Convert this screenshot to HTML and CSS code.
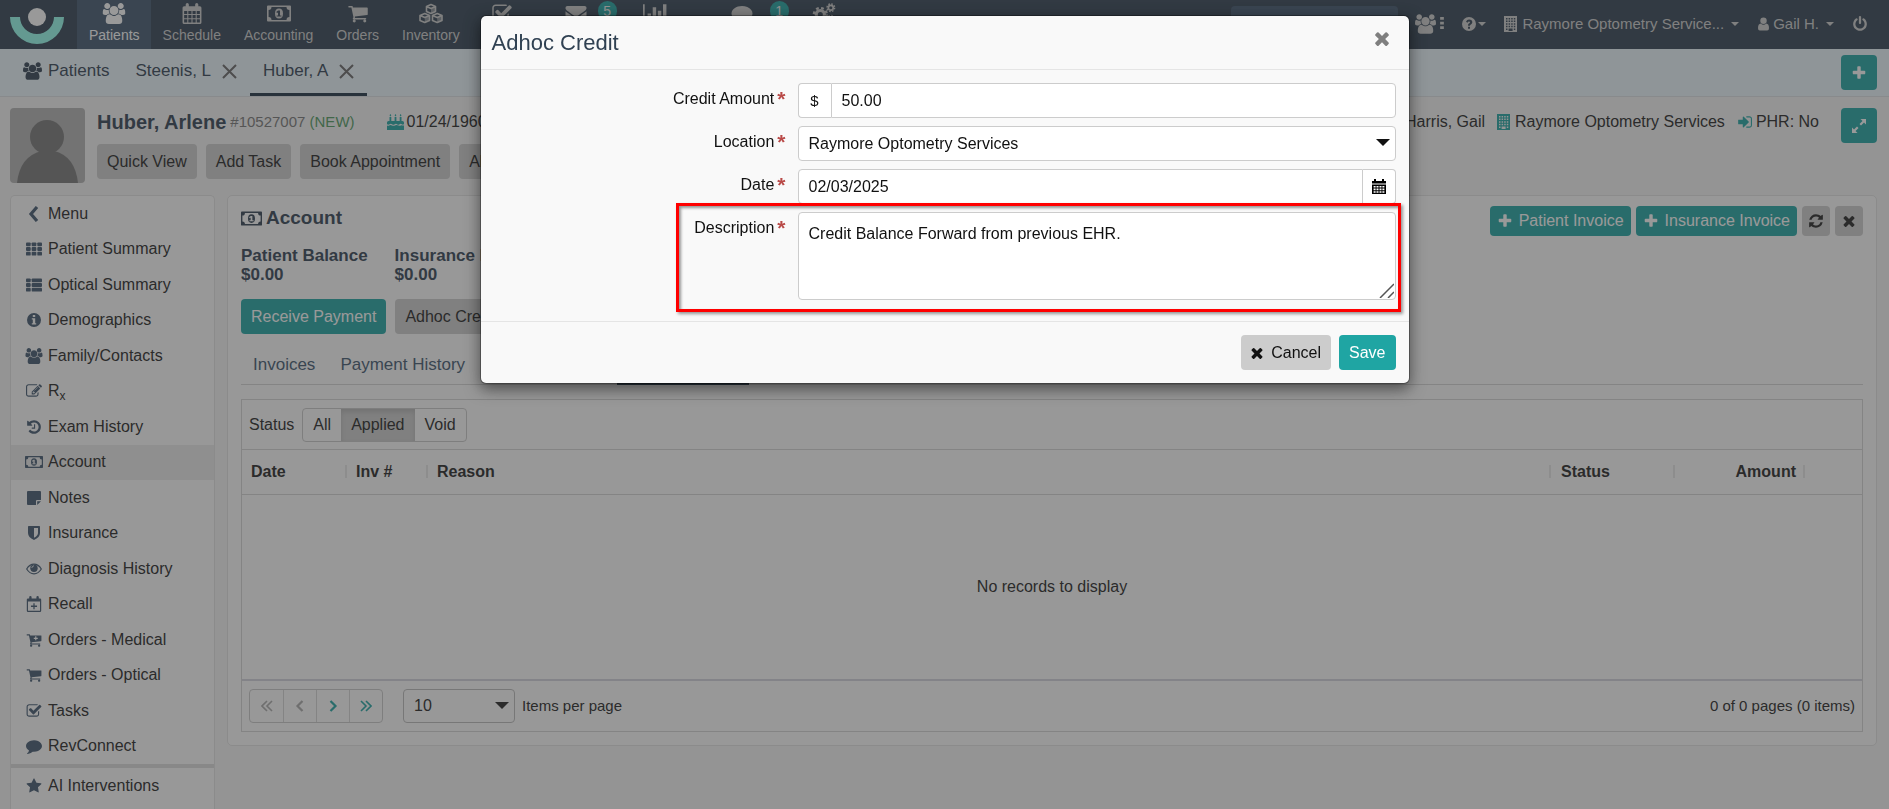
FILE: index.html
```html
<!DOCTYPE html>
<html lang="en">
<head>
<meta charset="utf-8">
<title>Adhoc Credit</title>
<link rel="stylesheet" href="styles.css">
</head>
<body>
<svg class="sprite" aria-hidden="true">
  <symbol id="users" viewBox="0 0 1920 1792"><path d="M593 896q-162 5-265 128h-134q-82 0-138-40.5t-56-118.5q0-353 124-353 6 0 43.5 21t97.5 42.5 119 21.5q67 0 133-23-5 37-5 66 0 139 81 256zm1071 637q0 120-73 189.5t-194 69.5h-874q-121 0-194-69.5t-73-189.5q0-53 3.5-103.5t14-109 26.5-108.5 43-97.5 62-81 85.5-53.5 111.5-20q10 0 43 21.5t73 48 107 48 135 21.5 135-21.5 107-48 73-48 43-21.5q61 0 111.5 20t85.5 53.5 62 81 43 97.5 26.5 108.5 14 109 3.5 103.5zm-1024-1277q0 106-75 181t-181 75-181-75-75-181 75-181 181-75 181 75 75 181zm704 384q0 159-112.5 271.5t-271.5 112.5-271.5-112.5-112.5-271.5 112.5-271.5 271.5-112.5 271.5 112.5 112.5 271.5zm576 225q0 78-56 118.5t-138 40.5h-134q-103-123-265-128 81-117 81-256 0-29-5-66 66 23 133 23 59 0 119-21.5t97.5-42.5 43.5-21q124 0 124 353zm-128-609q0 106-75 181t-181 75-181-75-75-181 75-181 181-75 181 75 75 181z"/></symbol>
  <symbol id="calendar" viewBox="0 0 20 20"><path fill-rule="evenodd" d="M2.500 3H4V1.500Q4 0 5.500 0T7 1.500V3h6V1.500Q13 0 14.500 0T16 1.500V3h1.500Q19 3 19 4.500v14Q19 20 17.500 20h-15Q1 20 1 18.500v-14Q1 3 2.500 3zM2.500 7.500v3h3v-3zM6.500 7.500v3h3v-3zM10.500 7.500v3h3v-3zM14.500 7.500v3h3v-3zM2.500 11.500v3h3v-3zM6.500 11.500v3h3v-3zM10.500 11.500v3h3v-3zM14.500 11.500v3h3v-3zM2.500 15.500v3h3v-3zM6.500 15.500v3h3v-3zM10.500 15.500v3h3v-3zM14.500 15.500v3h3v-3z"/></symbol>
  <symbol id="calsolid" viewBox="0 0 14 15"><path d="M0 2h2V0h2v2h6V0h2v2h2v2.500H0z"/><path fill-rule="evenodd" d="M0 5.500h14V15H0zM1.600 7v1.600h2V7zM4.500 7v1.600h2V7zM7.500 7v1.600h2V7zM10.400 7v1.600h2V7zM1.600 9.600v1.600h2V9.600zM4.500 9.600v1.600h2V9.600zM7.500 9.600v1.600h2V9.600zM10.400 9.600v1.600h2V9.600zM1.600 12.200v1.600h2v-1.600zM4.500 12.200v1.600h2v-1.600zM7.500 12.200v1.600h2v-1.600zM10.400 12.200v1.600h2v-1.600z"/></symbol>
  <symbol id="calplus" viewBox="0 0 20 20"><path fill-rule="evenodd" d="M2.500 3H4V1.500Q4 0 5.500 0T7 1.500V3h6V1.500Q13 0 14.500 0T16 1.500V3h1.500Q19 3 19 4.500v14Q19 20 17.500 20h-15Q1 20 1 18.500v-14Q1 3 2.500 3zM2.500 7v11.500h15V7zM9.200 9h1.600v3h3v1.600h-3v3H9.200v-3h-3V12h3z"/></symbol>
  <symbol id="money" viewBox="0 0 24 16"><path fill-rule="evenodd" d="M1 0h22q1 0 1 1v14q0 1-1 1H1q-1 0-1-1V1q0-1 1-1zm3.500 1.600Q4.500 4.500 1.600 4.500v7q2.900 0 2.900 2.900h15q0-2.900 2.900-2.900v-7q-2.900 0-2.900-2.900zM12 3q4 0 4 5t-4 5-4-5 4-5zm-.9 2-1.900 1.600.9 1 .9-.7v3H9.600V11h4.800V9.900H13V5z"/></symbol>
  <symbol id="cart" viewBox="0 0 1792 1792"><path d="M704 1536q0 52-38 90t-90 38-90-38-38-90 38-90 90-38 90 38 38 90zm896 0q0 52-38 90t-90 38-90-38-38-90 38-90 90-38 90 38 38 90zm128-1088v512q0 24-16.500 42.500t-40.500 21.500l-1044 122q13 60 13 70 0 16-24 64h920q26 0 45 19t19 45-19 45-45 19h-1024q-26 0-45-19t-19-45q0-11 8-31.500t16-36 21.500-40 15.500-29.500l-177-823h-204q-26 0-45-19t-19-45 19-45 45-19h256q16 0 28.500 6.500t19.500 15.500 13 24.500 8 26 5.500 29.500 4.500 26h1201q26 0 45 19t19 45z"/></symbol>
  <symbol id="cartplus" viewBox="0 0 1792 1792"><path fill-rule="evenodd" d="M704 1536q0 52-38 90t-90 38-90-38-38-90 38-90 90-38 90 38 38 90zm896 0q0 52-38 90t-90 38-90-38-38-90 38-90 90-38 90 38 38 90zm128-1088v512q0 24-16.500 42.500t-40.500 21.500l-1044 122q13 60 13 70 0 16-24 64h920q26 0 45 19t19 45-19 45-45 19h-1024q-26 0-45-19t-19-45q0-11 8-31.500t16-36 21.500-40 15.500-29.500l-177-823h-204q-26 0-45-19t-19-45 19-45 45-19h256q16 0 28.500 6.500t19.500 15.500 13 24.500 8 26 5.500 29.500 4.500 26h1201q26 0 45 19t19 45zM1030 480v160H870v130h160v160h130V770h160V640h-160V480z"/></symbol>
  <symbol id="cubes" viewBox="0 0 24 20"><g fill="none" stroke="currentColor" stroke-width="1.600" stroke-linejoin="round"><path d="M12 1l4.500 2v5L12 10 7.500 8V3zM7.500 3L12 5l4.500-2M5.800 10l4.700 2v5l-4.700 2-4.800-2v-5zM1 12l4.800 2 4.700-2M18.200 10l4.800 2v5l-4.800 2-4.700-2v-5zM13.500 12l4.700 2 4.800-2"/></g><path d="M12 5l4.500-2v5L12 10zM5.800 14l4.700-2v5l-4.700 2zM18.200 14l4.800-2v5l-4.800 2z" opacity=".55"/></symbol>
  <symbol id="check" viewBox="0 0 1792 1792"><path d="M1472 930v318q0 119-84.500 203.500t-203.500 84.500h-832q-119 0-203.500-84.500t-84.500-203.500v-832q0-119 84.500-203.500t203.500-84.500h832q63 0 117 25 15 7 18 23 3 17-9 29l-49 49q-10 10-23 10-3 0-9-2-23-6-45-6h-832q-66 0-113 47t-47 113v832q0 66 47 113t113 47h832q66 0 113-47t47-113v-254q0-13 9-22l64-64q10-10 23-10 6 0 12 3 20 8 20 29zm231-489l-814 814q-24 24-57 24t-57-24l-430-430q-24-24-24-57t24-57l110-110q24-24 57-24t57 24l263 263 647-647q24-24 57-24t57 24l110 110q24 24 24 57t-24 57z"/></symbol>
  <symbol id="envelope" viewBox="0 0 1792 1792"><path d="M1792 710v794q0 66-47 113t-113 47h-1472q-66 0-113-47t-47-113v-794q44 49 101 87 362 246 497 345 57 42 92.500 65.500t94.500 48 110 24.500h2q51 0 110-24.500t94.500-48 92.500-65.500q170-123 498-345 57-39 100-87zm0-294q0 79-49 151t-122 123q-376 261-468 325-10 7-42.500 31t-54 38.500-52 32.500-57.500 27-50 9h-2q-23 0-50-9t-57.500-27-52-32.500-54-38.500-42.500-31q-91-64-262-182.500t-205-142.500q-62-42-117-115.500t-55-136.500q0-78 41.500-130t118.500-52h1472q65 0 112.500 47t47.500 113z"/></symbol>
  <symbol id="chart" viewBox="0 0 21 18"><path d="M0 1h1.500v14H21v1.500H0zM4 9h3v5H4zM8.500 3.500h3V14h-3zM13 6.500h3V14h-3zM17.500 1h3v13h-3z"/></symbol>
  <symbol id="comment" viewBox="0 0 1792 1792"><path d="M1792 896q0 174-120 321.500t-326 233-450 85.500q-70 0-145-8-198 175-460 242-49 14-114 22-17 2-30.500-9t-17.500-29v-1q-3-4-.5-12t2-10 4.500-9.500l6-9 7-8.500 8-9q7-8 31-34.500t34.500-38 31-39.500 32.500-51 27-59 26-76q-157-89-247.500-220t-90.500-281q0-130 71-248.500t191-204.500 286-136.500 348-50.500q244 0 450 85.500t326 233 120 321.500z"/></symbol>
  <symbol id="cogs" viewBox="0 0 22 20"><g fill="none" stroke="currentColor"><circle cx="7.500" cy="11" r="3.900" stroke-width="3"/><circle cx="7.500" cy="11" r="6.200" stroke-width="2.200" stroke-dasharray="2.600 2.270"/><circle cx="17.500" cy="4.500" r="2.300" stroke-width="1.600"/><circle cx="17.500" cy="4.500" r="3.600" stroke-width="1.400" stroke-dasharray="1.500 1.327"/><circle cx="17.500" cy="15.500" r="2.300" stroke-width="1.600"/><circle cx="17.500" cy="15.500" r="3.600" stroke-width="1.400" stroke-dasharray="1.500 1.327"/></g></symbol>
  <symbol id="dots" viewBox="0 0 4 14"><path d="M0 0h4v3H0zM0 5h4v3H0zM0 10h4v3H0z"/></symbol>
  <symbol id="question" viewBox="0 0 14 14"><path fill-rule="evenodd" d="M7 0a7 7 0 1 1 0 14A7 7 0 0 1 7 0zM6 9.800v2h2v-2zM4 4.700l1.500 1Q6.100 4.400 7 4.400q1 0 1 .8T6.900 6.600Q6 7.200 6 8.800h2q0-.9.900-1.400Q10.300 6.500 10.300 5.200 10.300 2.400 7 2.400 5 2.400 4 4.700z"/></symbol>
  <symbol id="building" viewBox="0 0 13 16"><path fill-rule="evenodd" d="M0 0h13v16H0zM2 2v1.500h1.500V2zM4.600 2v1.500h1.500V2zM7.200 2v1.500h1.500V2zM9.800 2v1.500h1.500V2zM2 4.600v1.500h1.500V4.600zM4.600 4.600v1.500h1.500V4.600zM7.200 4.600v1.500h1.500V4.600zM9.800 4.600v1.500h1.500V4.600zM2 7.200v1.500h1.500V7.200zM4.600 7.200v1.500h1.500V7.200zM7.200 7.200v1.500h1.500V7.200zM9.800 7.200v1.500h1.500V7.200zM2 9.800v1.500h1.500V9.800zM4.600 9.800v1.500h1.500V9.800zM7.200 9.800v1.500h1.500V9.800zM9.800 9.800v1.500h1.500V9.800zM2 12.400v1.500h1.500v-1.500zM4.600 12.400V15h4v-2.600zM9.800 12.400v1.500h1.500v-1.500z"/></symbol>
  <symbol id="user" viewBox="0 0 12 14"><circle cx="6" cy="3.500" r="3.500"/><path d="M3 6.500Q4.300 7.800 6 7.800T9 6.500Q12 6.800 12 11.500 12 14 10 14H2Q0 14 0 11.500 0 6.800 3 6.500z"/></symbol>
  <symbol id="power" viewBox="0 0 1792 1792"><path d="M1664 896q0 156-61 298t-164 245-245 164-298 61-298-61-245-164-164-245-61-298q0-182 80.500-343t226.500-270q43-32 95.500-25t83.500 50q32 42 24.500 94.500t-49.500 84.500q-98 74-151.500 181t-53.500 228q0 104 40.500 198.500t109.500 163.500 163.500 109.500 198.500 40.500 198.500-40.500 163.500-109.500 109.500-163.500 40.500-198.500q0-121-53.500-228t-151.500-181q-42-32-49.500-84.500t24.500-94.500q31-43 84-50t95 25q146 109 226.500 270t80.500 343zm-640-768v640q0 52-38 90t-90 38-90-38-38-90v-640q0-52 38-90t90-38 90 38 38 90z"/></symbol>
  <symbol id="plus" viewBox="0 0 1792 1792"><path d="M1600 736v192q0 40-28 68t-68 28h-416v416q0 40-28 68t-68 28h-192q-40 0-68-28t-28-68v-416h-416q-40 0-68-28t-28-68v-192q0-40 28-68t68-28h416v-416q0-40 28-68t68-28h192q40 0 68 28t28 68v416h416q40 0 68 28t28 68z"/></symbol>
  <symbol id="times" viewBox="256 256 1280 1300"><path d="M1490 1322q0 40-28 68l-136 136q-28 28-68 28t-68-28l-294-294-294 294q-28 28-68 28t-68-28l-136-136q-28-28-28-68t28-68l294-294-294-294q-28-28-28-68t28-68l136-136q28-28 68-28t68 28l294 294 294-294q28-28 68-28t68 28l136 136q28 28 28 68t-28 68l-294 294 294 294q28 28 28 68z"/></symbol>
  <symbol id="thin-x" viewBox="0 0 15 15"><path d="M1 1l13 13M14 1L1 14" fill="none" stroke="currentColor" stroke-width="2"/></symbol>
  <symbol id="expand" viewBox="0 0 14 14"><path d="M8.500 0H14v5.500L12 3.500 9 6.500 7.500 5l3-3zM5.500 14H0V8.500l2 2 3-3L6.500 9l-3 3z"/></symbol>
  <symbol id="cake" viewBox="0 0 17 16"><path d="M2.500 3h1.800v4H2.500zM7.600 3h1.800v4H7.600zM12.700 3h1.800v4h-1.800zM3.400 0l.9 1.300-.9 1.200-.9-1.200zM8.500 0l.9 1.300-.9 1.200-.9-1.200zM13.600 0l.9 1.300-.9 1.200-.9-1.200zM1.500 7h14Q17 7 17 8.500V10q-1 1.200-2.200.2-1.200-1-2.200 0-1.500 1.200-2.500 0-1.200-1-2.400 0-1.400 1.200-2.600 0-1.300-1-2.500 0Q1 11.200 0 10V8.500Q0 7 1.500 7zM0 11.600q1.400.6 2.600-.4 1.400-.5 2.400.4 1.500.6 3.500-.4 1.500-.5 3 .4 1.300.4 2.700-.4 1.400.2 2.800.4V16H0z"/></symbol>
  <symbol id="signin" viewBox="0 128 1664 1536"><path d="M1312 896q0 26-19 45l-544 544q-19 19-45 19t-45-19-19-45v-288h-448q-26 0-45-19t-19-45v-384q0-26 19-45t45-19h448v-288q0-26 19-45t45-19 45 19l544 544q19 19 19 45zm352-352v704q0 119-84.500 203.500t-203.500 84.500h-320q-13 0-22.500-9.500t-9.500-22.500q0-70 35-96h320q66 0 113-47t47-113v-704q0-66-47-113t-113-47h-312q-43-5-43-64 0-64 32-64h320q119 0 203.500 84.500t84.500 203.500z"/></symbol>
  <symbol id="chevron" viewBox="0 0 12 16"><path d="M9 1L3 8l6 7" fill="none" stroke="currentColor" stroke-width="3.200"/></symbol>
  <symbol id="th" viewBox="0 0 17 14"><rect width="5" height="4" rx="1"/><rect x="6" width="5" height="4" rx="1"/><rect x="12" width="5" height="4" rx="1"/><rect y="5" width="5" height="4" rx="1"/><rect x="6" y="5" width="5" height="4" rx="1"/><rect x="12" y="5" width="5" height="4" rx="1"/><rect y="10" width="5" height="4" rx="1"/><rect x="6" y="10" width="5" height="4" rx="1"/><rect x="12" y="10" width="5" height="4" rx="1"/></symbol>
  <symbol id="thlist" viewBox="0 0 17 14"><rect width="5" height="4" rx="1"/><rect x="6" width="11" height="4" rx="1"/><rect y="5" width="5" height="4" rx="1"/><rect x="6" y="5" width="11" height="4" rx="1"/><rect y="10" width="5" height="4" rx="1"/><rect x="6" y="10" width="11" height="4" rx="1"/></symbol>
  <symbol id="info" viewBox="0 0 14 14"><path fill-rule="evenodd" d="M7 0a7 7 0 1 1 0 14A7 7 0 0 1 7 0zM5.800 2v2h2.400V2zM4.800 5.200v1.300h1v3.700h-1v1.400h4.400v-1.400h-1v-5z"/></symbol>
  <symbol id="edit" viewBox="0 0 1792 1792"><path d="M888 1184l116-116-152-152-116 116v56h96v96h56zm440-720q-16-16-33 1l-350 350q-17 17-1 33t33-1l350-350q17-17 1-33zm80 594v190q0 119-84.500 203.500t-203.500 84.500h-832q-119 0-203.500-84.500t-84.500-203.500v-832q0-119 84.500-203.500t203.500-84.500h832q63 0 117 25 15 7 18 23 3 17-9 29l-49 49q-14 14-32 8-23-6-45-6h-832q-66 0-113 47t-47 113v832q0 66 47 113t113 47h832q66 0 113-47t47-113v-126q0-13 9-22l64-64q15-15 35-7t20 29zm-96-738l288 288-672 672h-288v-288zm444 132l-92 92-288-288 92-92q28-28 68-28t68 28l152 152q28 28 28 68t-28 68z"/></symbol>
  <symbol id="history" viewBox="0 0 1792 1792"><path d="M1664 896q0 156-61 298t-164 245-245 164-298 61q-172 0-327-72.500t-264-204.500q-7-10-6.500-22.500t8.500-20.500l137-138q10-9 25-9 16 2 23 12 73 95 179 147t225 52q104 0 198.500-40.500t163.500-109.500 109.500-163.500 40.500-198.500-40.500-198.500-109.500-163.500-163.500-109.500-198.500-40.500q-98 0-188 35.500t-160 101.500l137 138q31 30 14 69-17 40-59 40h-448q-26 0-45-19t-19-45v-448q0-42 40-59 39-17 69 14l130 129q107-101 244.500-156.500t284.500-55.500q156 0 298 61t245 164 164 245 61 298zm-640-288v448q0 14-9 23t-23 9h-320q-14 0-23-9t-9-23v-64q0-14 9-23t23-9h224v-352q0-14 9-23t23-9h64q14 0 23 9t9 23z"/></symbol>
  <symbol id="note" viewBox="0 0 14 14"><path d="M1 0h12q1 0 1 1v8h-4q-1 0-1 1v4H1q-1 0-1-1V1q0-1 1-1zM10.200 10.200H14L10.200 14z"/></symbol>
  <symbol id="shield" viewBox="0 0 12 14"><path fill-rule="evenodd" d="M.7 0h10.600q.7 0 .7.700V7q0 4.300-6 7Q0 11.300 0 7V.7Q0 0 .7 0zM6 2v9.800Q10 9.700 10 7V2z"/></symbol>
  <symbol id="eye" viewBox="0 0 16 12"><path d="M.7 6Q3.600 1.200 8 1.200T15.300 6Q12.400 10.800 8 10.800T.7 6z" fill="none" stroke="currentColor" stroke-width="1.200"/><circle cx="8" cy="5.200" r="3.700"/><path d="M5.800 5Q6 3 8 2.800" stroke="#fff" stroke-width=".8" fill="none"/></symbol>
  <symbol id="star" viewBox="0 0 1792 1792"><path d="M1728 647q0 22-26 48l-363 354 86 500q1 7 1 20 0 21-10.500 35.500t-30.500 14.500q-19 0-40-12l-449-236-449 236q-22 12-40 12-21 0-31.500-14.500t-10.500-35.500q0-6 2-20l86-500-364-354q-25-27-25-48 0-37 56-46l502-73 225-455q19-41 49-41t49 41l225 455 502 73q56 9 56 46z"/></symbol>
  <symbol id="refresh" viewBox="0 0 1792 1792"><path d="M1639 1056q0 5-1 7-64 268-268 434.500t-478 166.500q-146 0-282.500-55t-243.500-157l-129 129q-19 19-45 19t-45-19-19-45v-448q0-26 19-45t45-19h448q26 0 45 19t19 45-19 45l-137 137q71 66 161 102t187 36q134 0 250-65t186-179q11-17 53-117 8-23 30-23h192q13 0 22.500 9.500t9.500 22.500zm25-800v448q0 26-19 45t-45 19h-448q-26 0-45-19t-19-45 19-45l138-138q-148-137-349-137-134 0-250 65t-186 179q-11 17-53 117-8 23-30 23h-199q-13 0-22.500-9.500t-9.500-22.500v-7q65-268 270-434.500t480-166.500q146 0 284 55.500t245 156.500l130-129q19-19 45-19t45 19 19 45z"/></symbol>
  <symbol id="angle" viewBox="0 0 12 12"><path d="M3.500 1l5 5-5 5" fill="none" stroke="currentColor" stroke-width="2.200"/></symbol>
  <symbol id="angles" viewBox="0 0 12 12"><path d="M1 1l5 5-5 5M6 1l5 5-5 5" fill="none" stroke="currentColor" stroke-width="1.600"/></symbol>
</svg>

<div class="app">
  <header class="topbar">
    <svg class="logo" viewBox="0 0 54 36" role="img" aria-label="Logo"><path d="M0 9h10a17 17 0 0 0 34 0h10a27 27 0 0 1-54 0z" fill="#95ffef"/><circle cx="27" cy="9" r="9" fill="#fff"/></svg>
    <nav class="mainnav">
      <a href="#" class="nav-item nav-active"><svg class="i-nav"><use href="#users"/></svg>Patients</a>
      <a href="#" class="nav-item"><svg class="i-nav"><use href="#calendar"/></svg>Schedule</a>
      <a href="#" class="nav-item"><svg class="i-nav"><use href="#money"/></svg>Accounting</a>
      <a href="#" class="nav-item"><svg class="i-nav"><use href="#cart"/></svg>Orders</a>
      <a href="#" class="nav-item"><svg class="i-nav"><use href="#cubes"/></svg>Inventory</a>
      <a href="#" class="nav-item nav-small" aria-label="Tasks"><svg class="i-nav"><use href="#check"/></svg></a>
      <a href="#" class="nav-item nav-messages" aria-label="Messages"><svg class="i-nav"><use href="#envelope"/></svg><span class="badge">5</span></a>
      <a href="#" class="nav-item nav-reports" aria-label="Reports"><svg class="i-nav"><use href="#chart"/></svg></a>
      <a href="#" class="nav-item nav-chat" aria-label="RevConnect"><svg class="i-nav"><use href="#comment"/></svg><span class="badge">1</span></a>
      <a href="#" class="nav-item nav-small" aria-label="More"><svg class="i-nav"><use href="#cogs"/></svg></a>
    </nav>
    <div class="topright">
      <input class="search" type="search" aria-label="Search">
      <button class="topbtn people" aria-label="Recent patients"><svg class="i-people"><use href="#users"/></svg><svg class="i-dots"><use href="#dots"/></svg></button>
      <button class="topbtn help" aria-label="Help"><svg class="i14"><use href="#question"/></svg><span class="caret"></span></button>
      <button class="topbtn place"><svg class="i-building"><use href="#building"/></svg>Raymore Optometry Service...<span class="caret"></span></button>
      <button class="topbtn account"><svg class="i-user"><use href="#user"/></svg>Gail H.<span class="caret"></span></button>
      <button class="topbtn" aria-label="Log out"><svg class="i16"><use href="#power"/></svg></button>
    </div>
  </header>

  <div class="tabbar">
    <a href="#" class="ptab"><svg class="i-tab"><use href="#users"/></svg>Patients</a>
    <a href="#" class="ptab">Steenis, L<svg class="i-x"><use href="#thin-x"/></svg></a>
    <a href="#" class="ptab ptab-active">Huber, A<svg class="i-x"><use href="#thin-x"/></svg></a>
    <button class="square" aria-label="Add"><svg class="i16"><use href="#plus"/></svg></button>
  </div>

  <section class="patient">
    <svg class="avatar" viewBox="0 0 75 75"><rect width="75" height="75" fill="#b2b2b2"/><circle cx="37" cy="29" r="17" fill="#777"/><path d="M7 75q3-27 25-32h12q21 5 24 32z" fill="#777"/></svg>
    <div class="pinfo">
      <div class="pline">
        <h1 class="pname">Huber, Arlene</h1>
        <span class="pid">#10527007 <span class="new">(NEW)</span></span>
        <span class="birth"><svg class="i-cake"><use href="#cake"/></svg>01/24/1960</span>
        <span class="pmeta">
          <span>Harris, Gail</span>
          <span class="meta"><svg class="i-building"><use href="#building"/></svg>Raymore Optometry Services</span>
          <span class="meta"><svg class="i-sign"><use href="#signin"/></svg>PHR: No</span>
        </span>
      </div>
      <div class="buttons">
        <button class="btn">Quick View</button><button class="btn">Add Task</button><button class="btn">Book Appointment</button><button class="btn">Alerts</button>
      </div>
    </div>
    <button class="square" aria-label="Expand"><svg class="i14"><use href="#expand"/></svg></button>
  </section>

  <div class="columns">
    <aside class="sidebar">
      <nav class="sidelist">
        <a href="#" class="side"><svg class="i-side"><use href="#chevron"/></svg>Menu</a>
        <a href="#" class="side"><svg class="i-side i-small"><use href="#th"/></svg>Patient Summary</a>
        <a href="#" class="side"><svg class="i-side i-small"><use href="#thlist"/></svg>Optical Summary</a>
        <a href="#" class="side"><svg class="i-side i-small"><use href="#info"/></svg>Demographics</a>
        <a href="#" class="side"><svg class="i-side"><use href="#users"/></svg>Family/Contacts</a>
        <a href="#" class="side"><svg class="i-side"><use href="#edit"/></svg><span>R<sub>x</sub></span></a>
        <a href="#" class="side"><svg class="i-side"><use href="#history"/></svg>Exam History</a>
        <a href="#" class="side side-active"><svg class="i-side"><use href="#money"/></svg>Account</a>
        <a href="#" class="side"><svg class="i-side i-small"><use href="#note"/></svg>Notes</a>
        <a href="#" class="side"><svg class="i-side i-small"><use href="#shield"/></svg>Insurance</a>
        <a href="#" class="side"><svg class="i-side i-small"><use href="#eye"/></svg>Diagnosis History</a>
        <a href="#" class="side"><svg class="i-side"><use href="#calplus"/></svg>Recall</a>
        <a href="#" class="side"><svg class="i-side"><use href="#cartplus"/></svg>Orders - Medical</a>
        <a href="#" class="side"><svg class="i-side"><use href="#cart"/></svg>Orders - Optical</a>
        <a href="#" class="side"><svg class="i-side"><use href="#check"/></svg>Tasks</a>
        <a href="#" class="side"><svg class="i-side"><use href="#comment"/></svg>RevConnect</a>
      </nav>
      <a href="#" class="side side-extra"><svg class="i-side"><use href="#star"/></svg>AI Interventions</a>
    </aside>

    <main class="card">
      <div class="cardhead">
        <h2 class="title"><svg class="i-title"><use href="#money"/></svg>Account</h2>
        <div class="actions">
          <button class="btn teal low"><svg class="i16"><use href="#plus"/></svg>Patient Invoice</button>
          <button class="btn teal low"><svg class="i16"><use href="#plus"/></svg>Insurance Invoice</button>
          <button class="btn low tiny" aria-label="Refresh"><svg class="i16"><use href="#refresh"/></svg></button>
          <button class="btn low tiny" aria-label="Close"><svg class="i-close"><use href="#times"/></svg></button>
        </div>
      </div>
      <div class="balances">
        <div>Patient Balance<br>$0.00</div>
        <div>Insurance Balance<br>$0.00</div>
      </div>
      <div class="buttons"><button class="btn teal">Receive Payment</button><button class="btn">Adhoc Credit</button></div>
      <div class="subtabs">
        <a href="#" class="subtab">Invoices</a><a href="#" class="subtab">Payment History</a><a href="#" class="subtab">Payment Plans</a><a href="#" class="subtab subtab-active">Adhoc Credits</a>
      </div>
      <div class="grid">
        <div class="toolbar">
          <span>Status</span>
          <div class="group"><button class="seg">All</button><button class="seg seg-on">Applied</button><button class="seg">Void</button></div>
        </div>
        <table class="records">
          <thead><tr><th class="c-date">Date</th><th class="c-inv">Inv #</th><th>Reason</th><th class="c-status">Status</th><th class="c-amount">Amount</th><th class="c-end"></th></tr></thead>
          <tbody><tr><td colspan="6">No records to display</td></tr></tbody>
        </table>
        <div class="pager">
          <div class="group">
            <button class="page off" aria-label="First page" disabled><svg class="i12 flip"><use href="#angles"/></svg></button>
            <button class="page off" aria-label="Previous page" disabled><svg class="i12 flip"><use href="#angle"/></svg></button>
            <button class="page" aria-label="Next page"><svg class="i12"><use href="#angle"/></svg></button>
            <button class="page" aria-label="Last page"><svg class="i12"><use href="#angles"/></svg></button>
          </div>
          <span class="drop dropsmall"><select id="size" class="field"><option>10</option></select></span>
          <label for="size">Items per page</label>
          <span class="total">0 of 0 pages (0 items)</span>
        </div>
      </div>
    </main>
  </div>
</div>

<div class="backdrop"></div>
<form class="modal" role="dialog" aria-labelledby="mtitle">
  <div class="mhead">
    <h2 class="mtitle" id="mtitle">Adhoc Credit</h2>
    <button type="button" class="mclose" aria-label="Close"><svg class="i-mclose"><use href="#times"/></svg></button>
  </div>
  <div class="mbody">
    <div class="row"><label class="label" for="amount">Credit Amount<span class="req">*</span></label>
      <div class="joined"><span class="addon">$</span><input id="amount" class="field" type="text" value="50.00"></div></div>
    <div class="row"><label class="label" for="location">Location<span class="req">*</span></label>
      <span class="drop"><select id="location" class="field"><option>Raymore Optometry Services</option></select></span></div>
    <div class="row"><label class="label" for="date">Date<span class="req">*</span></label>
      <div class="joined"><input id="date" class="field" type="text" value="02/03/2025"><button type="button" class="addon addbtn" aria-label="Pick a date"><svg class="i-pick"><use href="#calsolid"/></svg></button></div></div>
    <div class="row"><label class="label" for="desc">Description<span class="req">*</span></label>
      <div class="area"><textarea id="desc" class="field">Credit Balance Forward from previous EHR.</textarea><svg class="grip" viewBox="0 0 15 15"><path d="M1 15L15 1M9 15l6-6" stroke="#555" stroke-width="1.500"/></svg></div></div>
  </div>
  <div class="mfoot">
    <button type="button" class="btn cancel"><svg class="i-close"><use href="#times"/></svg>Cancel</button>
    <button type="submit" class="btn teal">Save</button>
  </div>
  <div class="highlight"></div>
</form>
</body>
</html>
```
FILE: styles.css
```css
* { box-sizing: border-box; }
body { margin: 0; height: 100vh; overflow: hidden; background: #f5f5f5; color: #222; font: 16px/20px "Liberation Sans", Arial, sans-serif; }
button, input, select, textarea { font: inherit; color: inherit; margin: 0; }
button { cursor: pointer; }
a { color: inherit; text-decoration: none; }
svg { fill: currentColor; flex: none; }
h1, h2 { margin: 0; }
.sprite { position: absolute; width: 0; height: 0; }
.i12 { width: 12px; height: 12px; }
.i14 { width: 14px; height: 14px; }
.i16 { width: 16px; height: 16px; }
.flip { transform: scaleX(-1); }

.app { display: flex; flex-direction: column; height: 100vh; }

.topbar { flex: none; display: flex; height: 49px; padding-left: 10px; background: #304152; color: #ccc; }
.logo { width: 54px; height: 36px; margin: 8px 13px 0 0; }
.mainnav { display: flex; }
.nav-item { position: relative; display: flex; flex-direction: column; align-items: center; gap: 2px; padding: 3px 11px 0 12px; font-size: 14px; line-height: 18px; }
.nav-active { background: #40576f; color: #fff; }
.i-nav { width: 24px; height: 21px; }
.nav-small { width: 61px; }
.nav-reports { width: 72px; }
.nav-messages { width: 87px; }
.nav-chat { width: 102px; }
.badge { position: absolute; top: 1px; left: 66px; width: 19px; height: 20px; border-radius: 10px; background: #1fa5a3; color: #eee; text-align: center; line-height: 20px; }
.nav-chat .badge { left: 79px; }
.topright { margin-left: auto; display: flex; align-items: center; padding-right: 21px; font-size: 15px; }
.search { align-self: flex-start; width: 167px; height: 34px; margin: 6px 17px 0 0; border: 0; border-radius: 4px; background: #40576f; }
.topbtn { display: flex; align-items: center; height: 40px; padding: 0; border: 0; background: none; margin-bottom: 2px; }
.people { gap: 4px; margin-right: 18px; }
.i-people { width: 21px; height: 20px; }
.i-dots { width: 4px; height: 13px; }
.help { margin-right: 18px; gap: 2px; }
.i-building { width: 13px; height: 16px; margin-right: 5px; }
.i-user { width: 11px; height: 14px; margin-right: 4px; }
.place { margin-right: 19px; }
.account { margin-right: 18px; }
.caret { border: 4px solid transparent; border-top-color: currentColor; border-bottom: 0; }
.place .caret, .account .caret { margin-left: 7px; }

.tabbar { flex: none; display: flex; height: 48px; padding: 0 12px 0 10px; background: #ebf6fc; border-bottom: 1px solid #dde1e4; color: #304152; font-size: 17px; }
.ptab { display: flex; align-items: center; padding: 0 13px; border-bottom: 3px solid transparent; }
.ptab-active { border-bottom-color: #1c3042; }
.i-tab { width: 19px; height: 18px; margin-right: 6px; }
.i-x { width: 15px; height: 15px; margin-left: 11px; color: #666; }
.square { display: flex; align-items: center; justify-content: center; width: 36px; height: 35px; padding: 0; border: 0; border-radius: 4px; background: #1fa5a3; color: #fff; margin-left: auto; }
.tabbar .square { margin-top: 6px; }

.patient { flex: none; display: flex; padding: 11px 12px 0 10px; }
.avatar { width: 75px; height: 75px; border-radius: 4px; margin-right: 12px; }
.pinfo { flex: 1; min-width: 0; }
.pline { display: flex; align-items: center; height: 27px; margin-bottom: 9px; }
.pname { font-size: 20px; line-height: 24px; color: #304152; margin-right: 4px; white-space: nowrap; }
.pid { font-size: 15px; color: #777; margin-right: 32px; white-space: nowrap; }
.new { color: #4f9a5f; }
.birth { display: flex; align-items: center; }
.i-cake { width: 17px; height: 16px; margin-right: 3px; color: #1fa5a3; }
.pmeta { display: flex; gap: 12px; margin-left: auto; margin-right: 22px; white-space: nowrap; }
.meta { display: flex; align-items: center; }
.meta svg { color: #1fa5a3; }
.i-sign { width: 15px; height: 14px; margin-right: 4px; }
.buttons { display: flex; gap: 9px; }
.btn { display: flex; align-items: center; height: 35px; padding: 0 10px; border: 0; border-radius: 4px; background: #ccc; white-space: nowrap; }
.teal { background: #1fa5a3; color: #fff; }

.columns { flex: 1; min-height: 0; display: flex; gap: 12px; padding: 12px 12px 0 10px; align-items: flex-start; }
.sidebar { flex: none; width: 205px; min-height: 100%; border: 1px solid #e2e2e2; border-bottom: 0; border-radius: 5px 5px 0 0; background: #fdfdfd; }
.sidelist { display: grid; grid-auto-rows: 1fr; min-height: 568px; border-bottom: 4px solid #ddd; box-sizing: content-box; }
.side { display: flex; align-items: center; gap: 5px; padding-left: 14px; }
.side-active { background: #eaeaea; }
.side-extra { height: 36px; }
.side sub { font-size: 12px; line-height: 0; }
.i-side { width: 18px; height: 16px; color: #40576f; }
.i-small { padding: 1px; }

.card { flex: 1; min-width: 0; padding: 10px 13px 13px; border: 1px solid #e2e2e2; border-radius: 5px; background: #fdfdfd; }
.cardhead { display: flex; justify-content: space-between; align-items: flex-start; height: 40px; }
.title { display: flex; align-items: center; gap: 4px; height: 24px; font-size: 19px; color: #304152; }
.i-title { width: 21px; height: 15px; }
.actions { display: flex; gap: 5px; }
.low { height: 30px; padding: 0 7px; gap: 6px; }
.tiny { width: 28px; padding: 0; justify-content: center; }
.i-close { width: 12px; height: 12px; margin: 0 1px; }
.balances { display: flex; gap: 27px; margin-bottom: 15px; font-weight: bold; font-size: 17px; line-height: 19px; color: #304152; }
.subtabs { display: flex; height: 51px; border-bottom: 1px solid #d5d5d5; color: #40576f; font-size: 17px; }
.subtab { display: flex; align-items: center; height: 51px; padding: 13px 13px 0 12px; border-bottom: 3px solid transparent; }
.subtab-active { border-bottom-color: #1c3042; }

.grid { margin-top: 14px; border: 1px solid #d5d5d5; }
.toolbar { display: flex; align-items: center; gap: 8px; height: 50px; padding-left: 7px; border-bottom: 1px solid #d5d5d5; }
.group { display: flex; border: 1px solid #c8c8c8; border-radius: 4px; overflow: hidden; }
.seg { height: 32px; padding: 0 10px; border: 0; background: none; }
.seg-on { background: #ccc; box-shadow: inset 0 3px 5px rgba(0, 0, 0, .13); }
.records { width: 100%; border-collapse: collapse; table-layout: fixed; }
.records th { height: 44px; padding: 0 9px; text-align: left; border-bottom: 1px solid #d5d5d5; background: linear-gradient(#e6e6e6, #e6e6e6) right center / 2px 13px no-repeat; }
.records .c-date { width: 105px; }
.records .c-inv { width: 81px; }
.records .c-status { width: 124px; padding-left: 10px; }
.records .c-amount { width: 130px; text-align: right; }
.records .c-end { width: 57px; background: none; }
.records td { height: 186px; padding: 0; text-align: center; border-bottom: 2px solid #d3d3dc; }
.pager { display: flex; align-items: center; height: 50px; padding: 0 7px; font-size: 15px; }
.page { display: flex; align-items: center; justify-content: center; width: 33px; height: 32px; padding: 0; border: 0; border-left: 1px solid #d5d5d5; background: none; color: #1fa5a3; }
.page:first-child { border-left: 0; }
.off { color: #aaa; }
.total { margin-left: auto; }

.field { flex: 1; min-width: 0; width: 100%; height: 35px; padding: 0 10px; border: 1px solid #ccc; border-radius: 4px; background: #fff; outline: 0; appearance: none; }
.drop { position: relative; flex: 1; display: flex; }
.drop::after { content: ""; position: absolute; right: 6px; top: 13px; border: 7px solid transparent; border-top-color: currentColor; border-bottom: 0; pointer-events: none; }
.dropsmall { flex: none; width: 112px; margin: 0 7px 0 20px; font-size: 16px; }
.dropsmall .field { height: 34px; border-color: #bbb; background: none; }

.backdrop { position: fixed; inset: 0; background: rgba(51, 51, 51, .5); }
.modal { position: fixed; top: 15px; left: 0; right: 0; width: 930px; margin: 0 auto; border: 1px solid rgba(0, 0, 0, .3); background: #f9f9f9; background-clip: padding-box; border-radius: 6px; box-shadow: 0 5px 15px rgba(0, 0, 0, .5); color: #111; }
.mhead { display: flex; align-items: center; justify-content: space-between; height: 54px; padding: 0 19px 0 11px; border-bottom: 1px solid #e5e5e5; }
.mtitle { font-size: 22px; font-weight: normal; color: #304152; }
.mclose { display: flex; padding: 0; margin-bottom: 8px; border: 0; background: none; color: #7f7f7f; }
.i-mclose { width: 16px; height: 15px; }
.mbody { display: flex; flex-direction: column; gap: 8px; padding: 13px 13px 21px; border-bottom: 1px solid #e5e5e5; }
.row { display: grid; grid-template-columns: 1fr 598px; column-gap: 12px; }
.label { display: flex; justify-content: flex-end; gap: 3px; padding-top: 6px; }
.req { color: #b94a48; font-size: 21px; font-weight: bold; line-height: 20px; }
.joined { display: flex; }
.addon { display: flex; align-items: center; justify-content: center; width: 33px; height: 35px; padding: 0; border: 1px solid #ccc; border-radius: 4px 0 0 4px; background: #fff; font-size: 15px; border-right: 0; }
.addon + .field { border-radius: 0 4px 4px 0; }
#date { border-radius: 4px 0 0 4px; }
.addbtn { border-radius: 0 4px 4px 0; border-right: 1px solid #ccc; border-left: 0; color: #000; }
.i-pick { width: 14px; height: 15px; }
.area { position: relative; display: flex; }
.area .field { height: 88px; padding: 11px 10px; resize: none; }
.grip { position: absolute; right: 2px; bottom: 2px; width: 15px; height: 15px; }
.mfoot { display: flex; justify-content: flex-end; gap: 8px; padding: 13px; }
.cancel { gap: 7px; padding: 0 10px 0 9px; }
.mfoot .btn { height: 35px; }
.highlight { position: absolute; left: 195px; right: 8px; top: 187px; height: 109px; border: 3px solid #f00; box-shadow: 2px 2px 3px rgba(0, 0, 0, .4), inset 2px 2px 3px rgba(0, 0, 0, .4); pointer-events: none; }
```
